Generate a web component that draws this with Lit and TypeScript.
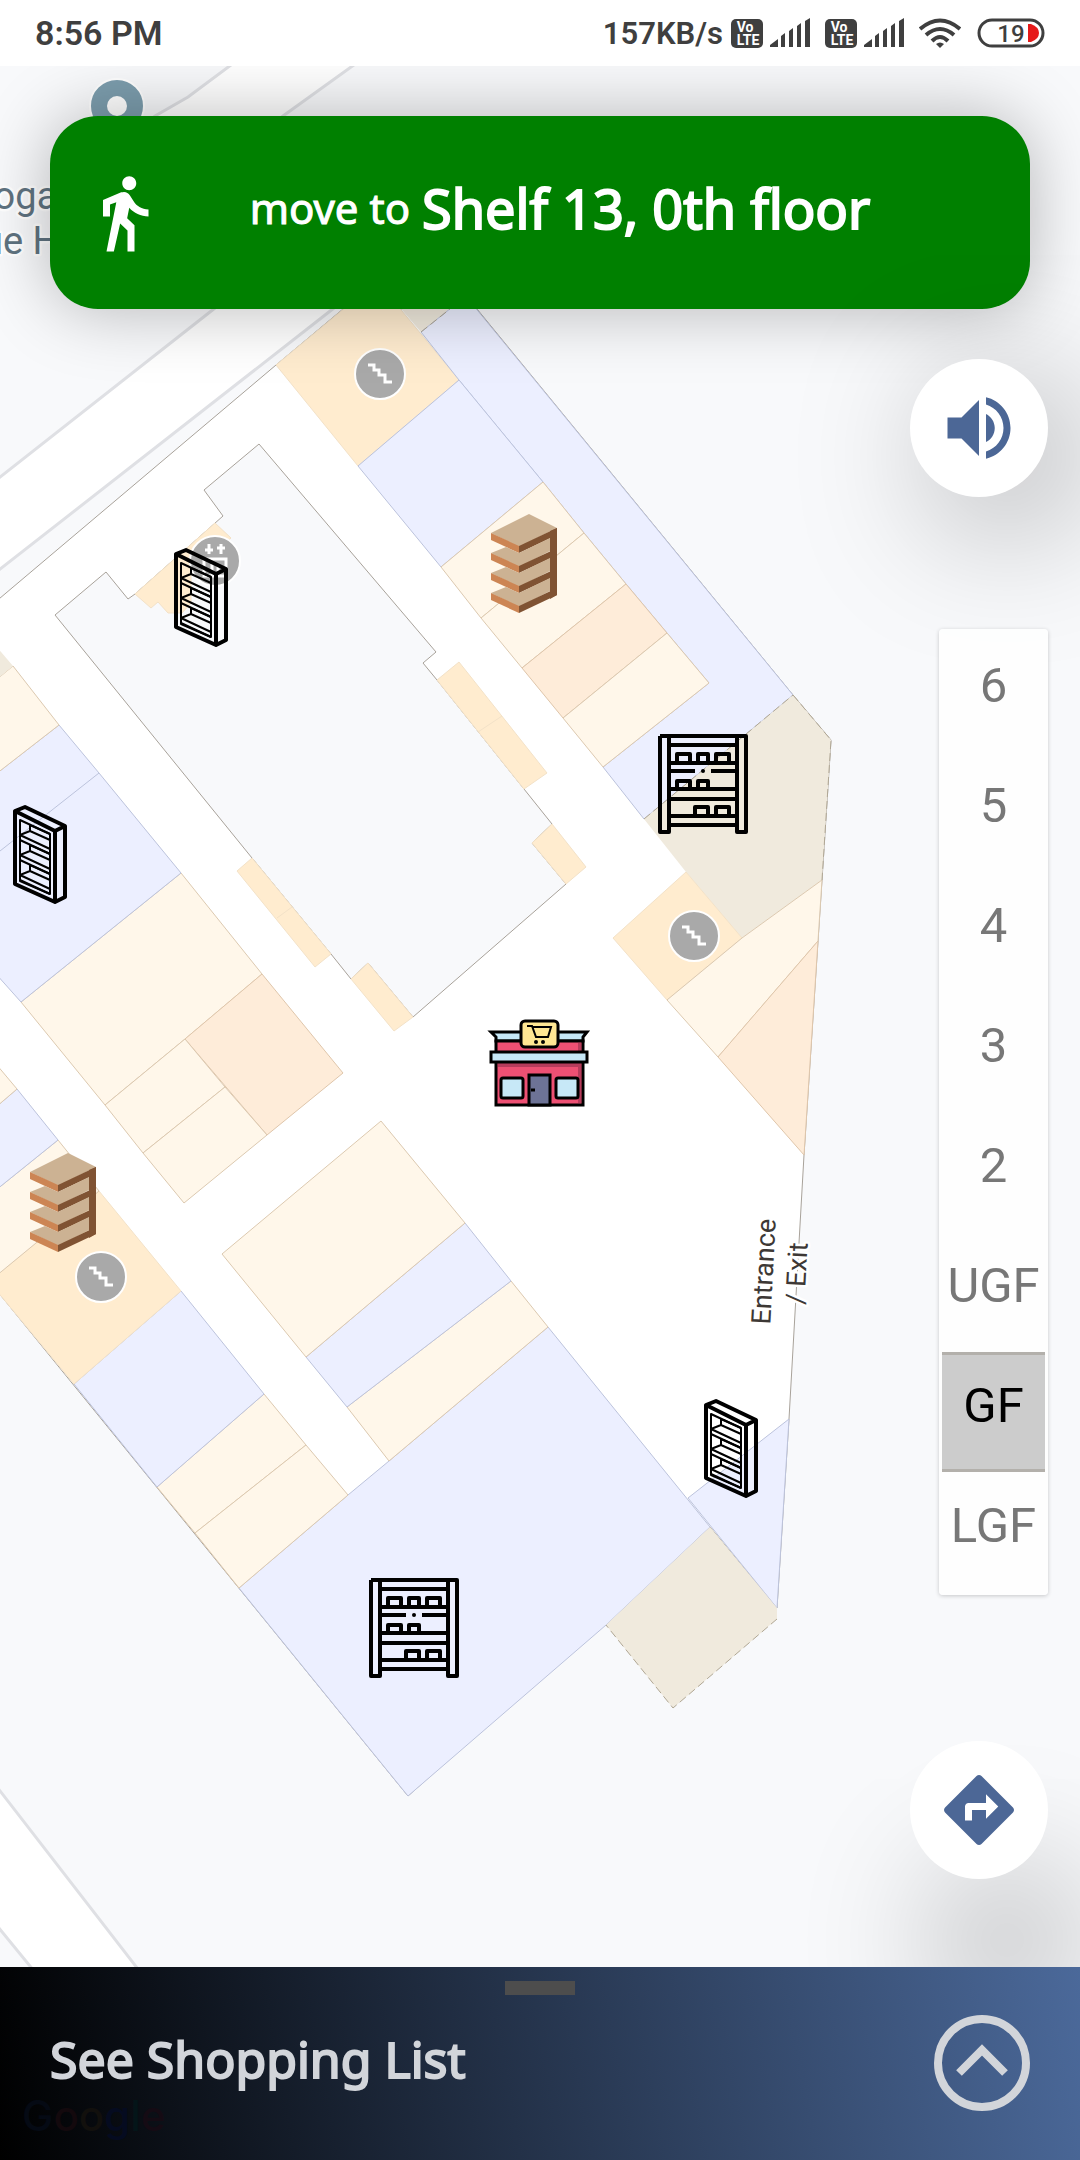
import { LitElement, html, svg, css } from "lit";
import { customElement, property, state } from "lit/decorators.js";
import { classMap } from "lit/directives/class-map.js";

type Area = [kind: string, points: string];
type Spot = [x: number, y: number];

/* Floor plan rooms, by fill kind. */
const AREAS: Area[] = [
  ["hall", "-20,615 276,365 343,309 477,309 793,695 831,740 822,880 804,1155 789,1419 777,1608 710,1527 408,1796 -20,1270"],
  ["lift", "276,365 370,287 383,288 459,380 358,466"],
  ["open", "385,290 421,332 476,288"],
  ["blue", "421,332 476,288 460,289 793,695 644,819 603,767 709,683 667,633 626,584 584,533 543,482 459,380"],
  ["blue", "459,380 543,482 441,567 358,466"],
  ["cream", "543,482 584,533 481,618 441,567"],
  ["cream", "584,533 626,584 522,668 481,618"],
  ["peach", "626,584 667,633 563,718 522,668"],
  ["cream", "667,633 709,683 603,767 563,718"],
  ["open", "793,695 831,740 822,880 742,938 686,872 644,819"],
  ["lift", "686,872 742,938 667,1000 613,938"],
  ["cream", "742,938 822,880 818,941 718,1057 667,1000"],
  ["peach", "818,941 718,1057 804,1155"],
  ["blue", "789,1419 688,1498 777,1608"],
  ["blue", "548,1327 710,1527 606,1625 408,1796 239,1588 348,1495 389,1461"],
  ["open", "710,1527 777,1608 777,1619 673,1708 606,1625"],
  ["cream", "511,1281 548,1327 389,1461 347,1407"],
  ["blue", "465,1223 511,1281 347,1407 306,1357"],
  ["cream", "381,1121 465,1223 306,1357 222,1254"],
  ["cream", "264,1394 306,1445 195,1533 157,1487"],
  ["cream", "306,1445 348,1495 239,1588 195,1533"],
  ["blue", "181,1291 264,1394 157,1487 74,1384"],
  ["lift", "99,1191 181,1291 74,1384 -4,1290 -4,1276"],
  ["cream", "58,1140 99,1191 -4,1276 -4,1190"],
  ["blue", "17,1089 58,1140 -4,1190 -4,1107"],
  ["cream", "-4,1064 17,1089 -4,1107"],
  ["cream", "181,873 262,974 185,1039 105,1105 21,1002"],
  ["peach", "262,974 343,1073 267,1135 185,1039"],
  ["cream", "185,1039 225,1087 143,1153 105,1105"],
  ["cream", "225,1087 267,1135 184,1203 143,1153"],
  ["blue", "59,725 99,773 181,873 21,1002 -4,974 -4,774"],
  ["cream", "13,666 59,725 -4,774 -4,680"],
  ["open", "-4,646 13,666 -4,680"],
  ["atrium", "259,444 204,490 223,516 135,594 128,599 106,572 55,615 252,858 331,954 351,979 368,963 413,1017 566,884 532,843 552,824 524,789 437,680 423,663 436,652"],
  ["lift", "215,523 231,538 191,575 191,603 182,613 168,613 158,602 151,608 135,594"],
  ["lift", "459,662 437,680 524,789 547,773"],
  ["lift", "552,824 532,843 566,884 586,867"],
  ["lift", "252,858 237,871 315,967 331,954"],
  ["lift", "368,963 351,979 394,1031 413,1017"],
];

const BOOKCASES: Spot[] = [[174, 548], [13, 805], [704, 1399]];
const WOOD_SHELVES: Spot[] = [[490, 513], [29, 1152]];
const RACKS: Spot[] = [[658, 734], [369, 1578]];
const STAIRS: Spot[] = [[380, 374], [694, 936], [101, 1277]];

const at = ([x, y]: Spot) => `translate(${x} ${y})`;

const bookcase = (s: Spot) => svg`
  <g transform=${at(s)} class="ink">
    <path stroke-width="4" d="M2 6 12 2 52 21V92L42 97 2 79ZM2 6 42 26 52 21M42 26V97"/>
    <path stroke-width="2" d="M7 15 37 29V89L7 76Z"/>
    ${[0, 20, 40].map((d) => svg`
      <path stroke-width="2" transform=${`translate(0 ${d})`}
        d="M17 19V26L7 30 37 44M7 35 37 49M17 26 37 35M17 20 37 29"/>`)}
  </g>`;

const woodShelf = (s: Spot) => svg`
  <g transform=${at(s)}>
    ${[0, 1, 2, 3].map((i) => {
      const y = [20, 40, 60, 80][i];
      return svg`
        <path fill="#ccb293" d=${i === 0
          ? "M39 1 67 15 29 34 1 20Z"
          : `M1 ${y}L16 ${y - 6} 29 ${y} 60 ${y - 15}V${y - 2}L29 ${y + 14}Z`}/>
        <path fill="#cc8554" d=${`M1 ${y}L29 ${y + 13}V${y + 20}L1 ${y + 7}Z`}/>
        <path fill="#805333" d=${i % 3 === 0
          ? `M29 ${y + 13}L67 ${y - 5}V${y + 2}L29 ${y + 20}Z`
          : `M29 ${y + 13}L61 ${y - 2}V${y + 5}L29 ${y + 20}Z`}/>`;
    })}
    <path fill="#805333" d="M60 18 67 15V82L60 86Z"/>
  </g>`;

const rack = (s: Spot) => svg`
  <g transform=${at(s)} class="ink" stroke-width="4">
    <path d="M2 2H88V98H79V2M2 2V98H11V2"/>
    <path d="M11 11H79M11 29H79M11 37H37M53 37H79M11 55H79M11 65H79M11 82H79M11 91H79"/>
    <path d="M19 29V20H32V29M40 29V20H50V29M58 29V20H71V29M19 55V47H32V55M40 55V47H50V55M37 82V73H50V82M58 82V73H71V82"/>
    <circle cx="45" cy="37" r="2" fill="#000" stroke="none"/>
  </g>`;

const stairs = (s: Spot) => svg`
  <g transform=${at(s)}>
    <circle r="25" fill="#a9a9a9" stroke="#fff" stroke-width="2"/>
    <path fill="none" stroke="#fff" stroke-width="3" d="M-12-9H-6V-4H-1V1H5V8H12"/>
  </g>`;

const store = svg`
  <g transform="translate(489 1019)">
    <path fill="#c7e8f7" stroke="#000" stroke-width="3" d="M2 13H98L94 18V22H7V18Z"/>
    <path fill="#ee5073" stroke="#000" stroke-width="3" d="M7 22H94V86H7Z"/>
    <path fill="#b73c5c" d="M9 44H92V48H9ZM89 24H92V84H89Z"/>
    <rect x="2" y="33" width="96" height="10" fill="#c7e8f7" stroke="#000" stroke-width="3"/>
    <rect x="12" y="59" width="22" height="20" rx="2" fill="#c7e8f7" stroke="#000" stroke-width="3"/>
    <rect x="67" y="59" width="22" height="20" rx="2" fill="#c7e8f7" stroke="#000" stroke-width="3"/>
    <path fill="#6d7396" stroke="#000" stroke-width="3" d="M40 86V56H61V86Z"/>
    <path stroke="#000" stroke-width="3" d="M42 71H46"/>
    <rect x="32" y="2" width="37" height="26" rx="4" fill="#ffe793" stroke="#000" stroke-width="3"/>
    <path fill="none" stroke="#000" stroke-width="2" d="M38 7H43L47 18H59L62 8H44"/>
    <circle cx="47" cy="23" r="2"/><circle cx="54" cy="23" r="2"/>
  </g>`;

@customElement("floor-map")
class FloorMap extends LitElement {
  static styles = css`
    :host { display: block; }
    svg { display: block; width: 100%; height: 100%; background: #f8f9fb; }
    polygon { stroke-width: 1; }
    .hall { fill: #fff; stroke: #a8a29a; }
    .atrium { fill: #f8f9fb; stroke: #a8a29a; }
    .lift { fill: #ffeccf; stroke: #f3e2c8; }
    .open { fill: #f0eadd; }
    .edge { fill: none; stroke: #b0a794; stroke-dasharray: 8 4; }
    .blue { fill: #ecefff; stroke: #bcc3dc; }
    .cream { fill: #fff7ea; stroke: #dcc9b0; }
    .peach { fill: #feecd9; stroke: #dfc6ab; }
    .road { fill: #fff; stroke: #dfe0e4; stroke-width: 3; }
    .seam { fill: none; stroke: #bcc3dc; }
    .seam-lift { fill: none; stroke: #f3e2c8; }
    .ink { fill: none; stroke: #000; stroke-linejoin: round; }
    text { font-family: Roboto, "Liberation Sans", sans-serif; paint-order: stroke; stroke: #fff; stroke-width: 5px; stroke-linejoin: round; }
    .place { font-size: 38px; fill: #5f7380; }
    .gate { font-size: 27px; fill: #3d3835; text-anchor: middle; }
  `;

  render() {
    return html`
      <svg viewBox="0 66 1080 1901" preserveAspectRatio="xMidYMin slice" role="img" aria-label="Floor map">
        <path class="road" d="M235 62 188 97 155 116 100 160H230L283 116 358 62Z"/>
        <path class="road" d="M-10 485 215 308 260 270H380L334 308-10 577Z"/>
        <path class="road" d="M-10 1778 148 1982H43L-10 1917Z"/>
        ${AREAS.map(([kind, points]) => svg`<polygon class=${kind} points=${points}/>`)}
        <path class="edge" d="M793 695 831 740 822 880M777 1619 673 1708 606 1625M644 819 793 695M421 332 450 309"/>
        <path class="seam" d="M99 773 0 851"/>
        <path class="seam-lift" d="M502 716 478 732M292 907 277 918"/>
        <circle cx="117" cy="106" r="27" fill="#7c9dad" stroke="#fff" stroke-width="2"/>
        <circle cx="117" cy="106" r="10" fill="#fff"/>
        <text class="place" x="-28" y="209">Yoga</text>
        <text class="place" x="-18" y="254">ue H</text>
        <text class="gate" transform="translate(773 1272) rotate(-87)">Entrance</text>
        <text class="gate" transform="translate(806 1274) rotate(-87)">/ Exit</text>
        ${STAIRS.map(stairs)}
        <g transform="translate(215 561)">
          <circle r="25" fill="#a9a9a9" stroke="#fff" stroke-width="2"/>
          <path fill="none" stroke="#fff" stroke-width="3" d="M-6-17V-7M-10-11H-2M6-7V-17M2-13H10M-11-2H11V15H-11ZM-3 3V15M3 3V15"/>
        </g>
        ${BOOKCASES.map(bookcase)} ${WOOD_SHELVES.map(woodShelf)} ${RACKS.map(rack)} ${store}
      </svg>`;
  }
}

@customElement("status-bar")
class StatusBar extends LitElement {
  static styles = css`
    :host { display: flex; align-items: center; justify-content: space-between; height: 66px; padding: 0 35px; box-sizing: border-box; background: #fff; color: #3f3f3f; font-family: Roboto, "Liberation Sans", sans-serif; font-weight: 600; }
    .time { font-size: 34px; }
    .rate { font-size: 31px; margin-right: 8px; }
    .icons { display: flex; align-items: center; }
    .sim { display: flex; gap: 7px; margin-right: 15px; }
    svg { display: block; }
    .wifi { margin-right: 16px; }
    .badge { font-size: 14px; font-weight: 700; fill: #fff; text-anchor: middle; }
    .charge { font-size: 24px; font-weight: 500; fill: #3f3f3f; text-anchor: middle; }
  `;

  private sim() {
    return html`
      <span class="sim">
        <svg width="32" height="30" viewBox="0 0 32 30">
          <rect y="1" width="32" height="29" rx="5" fill="#3f3f3f"/>
          <text class="badge" x="14" y="14">Vo</text>
          <text class="badge" x="17" y="27">LTE</text>
        </svg>
        <svg width="40" height="30" viewBox="0 0 40 30" fill="#3f3f3f">
          <path d="M0 29V27L8 21V29ZM11 29V18L15 15V29ZM19 29V13L23 10V29ZM27 29V8L31 5V29ZM35 29V3L40 0V29Z"/>
        </svg>
      </span>`;
  }

  render() {
    return html`
      <span class="time">8:56 PM</span>
      <span class="icons">
        <span class="rate">157KB/s</span>
        ${this.sim()} ${this.sim()}
        <svg class="wifi" width="42" height="30" viewBox="0 0 42 30" fill="none" stroke="#3f3f3f" stroke-width="4">
          <path d="M1 11Q21-6 41 11M7 17Q21 5 35 17M13 23Q21 15 29 23"/>
          <path fill="#3f3f3f" stroke="none" d="M17 26Q21 23 25 26L21 30Z"/>
        </svg>
        <svg width="68" height="30" viewBox="0 0 68 30">
          <rect x="2" y="2" width="64" height="26" rx="13" fill="#fff" stroke="#3f3f3f" stroke-width="3"/>
          <text class="charge" x="34" y="24">19</text>
          <path fill="#e61a1a" d="M51 6H54Q62 9 62 15T54 24H51Z"/>
        </svg>
      </span>`;
  }
}

@customElement("app-root")
class AppRoot extends LitElement {
  @property({ type: Array }) floors = ["6", "5", "4", "3", "2", "UGF", "GF", "LGF"];
  @state() private floor = "GF";

  static styles = css`
    :host { display: flex; flex-direction: column; min-height: 100vh; font-family: "Noto Sans", "Open Sans", sans-serif; }
    button { border: 0; margin: 0; padding: 0; background: none; font: inherit; cursor: pointer; }
    svg { display: block; }
    .stage { position: relative; flex: 1; display: flex; flex-direction: column; padding-top: 50px; overflow: hidden; }
    .map { position: absolute; inset: 0; }
    .banner { position: relative; display: flex; align-items: center; margin: 0 50px; padding: 0 76px 0 32px; height: 193px; box-sizing: border-box; border-radius: 48px; background: #008000; color: #fff; box-shadow: 0 0 70px rgba(0, 0, 0, 0.28); }
    .step { flex: 1; display: flex; align-items: center; justify-content: center; gap: 12px; margin: 0; padding-bottom: 10px; white-space: nowrap; -webkit-text-stroke: 1px currentColor; }
    .verb { font-size: 42px; }
    .target { font-size: 54px; -webkit-text-stroke-width: 2px; }
    .controls { position: relative; flex: 1; display: flex; flex-direction: column; align-items: flex-end; padding: 50px 32px 88px; }
    .round { display: grid; place-items: center; width: 138px; height: 138px; border-radius: 50%; background: #fff; color: #4c6796; }
    .sound { box-shadow: 28px 28px 140px rgba(0, 0, 0, 0.35); }
    .route { margin-top: auto; box-shadow: 28px 130px 140px rgba(0, 0, 0, 0.3); }
    .floors { display: flex; flex-direction: column; width: 109px; margin-top: 132px; padding: 3px; box-sizing: border-box; border-radius: 4px; background: rgba(255, 255, 255, 0.8); box-shadow: 0 1px 4px rgba(0, 0, 0, 0.2); }
    .floor { height: 120px; padding-bottom: 14px; box-sizing: border-box; font-family: Roboto, "Liberation Sans", sans-serif; font-size: 49px; color: #777; border: solid transparent; border-width: 3px 0; }
    .current { background: #ccc; color: #000; border-color: #b3b0ab; }
    .sheet { position: relative; padding: 14px 50px 49px; background: linear-gradient(80deg, #000, #4b699a); }
    .handle { width: 70px; height: 14px; margin: 0 auto 20px; background: #4d4d4d; }
    .row { position: relative; display: flex; align-items: center; justify-content: space-between; width: 100%; height: 96px; color: #d2d5da; }
    .title { margin-bottom: 8px; font-size: 50px; line-height: 52px; -webkit-text-stroke: 2px currentColor; }
    .brand { position: absolute; left: 22px; bottom: 22px; font: 500 42px/44px Inter, sans-serif; }
    .b1 { color: #050a14; }
    .b2 { color: #13090d; }
    .b3 { color: #12100d; }
    .b4 { color: #050b20; }
    .b5 { color: #041519; }
    .b6 { color: #150b14; }
  `;

  render() {
    return html`
      <status-bar></status-bar>
      <main class="stage">
        <floor-map class="map"></floor-map>
        <header class="banner">
          <svg width="84" height="84" viewBox="0 0 24 24" fill="currentColor" aria-hidden="true">
            <path d="M13.500 5.500c1.100 0 2-.9 2-2s-.9-2-2-2-2 .9-2 2 .9 2 2 2zM9.800 8.900L7 23h2.100l1.800-8 2.100 2v6h2v-7.500l-2.100-2 .6-3C14.800 12 16.800 13 19 13v-2c-1.900 0-3.500-1-4.300-2.400l-1-1.600c-.4-.6-1-1-1.700-1-.3 0-.5.1-.8.1L6 8.300V13h2V9.600l1.800-.7"/>
          </svg>
          <p class="step"><span class="verb">move to</span><span class="target">Shelf 13, 0th floor</span></p>
        </header>
        <div class="controls">
          <button class="round sound" aria-label="Voice guidance">
            <svg width="84" height="84" viewBox="0 0 24 24" fill="currentColor">
              <path d="M3 9v6h4l5 5V4L7 9H3zm13.500 3c0-1.770-1.020-3.290-2.500-4.030v8.050c1.480-.73 2.500-2.250 2.500-4.020zM14 3.230v2.060c2.890.86 5 3.540 5 6.710s-2.110 5.850-5 6.710v2.060c4.010-.91 7-4.490 7-8.770s-2.990-7.860-7-8.770z"/>
            </svg>
          </button>
          <nav class="floors" aria-label="Floor">
            ${this.floors.map((name) => html`
              <button
                class=${classMap({ floor: true, current: name === this.floor })}
                aria-pressed=${name === this.floor ? "true" : "false"}
                @click=${() => (this.floor = name)}
              >${name}</button>`)}
          </nav>
          <button class="round route" aria-label="Directions">
            <svg width="84" height="84" viewBox="0 0 24 24" fill="currentColor">
              <path d="M21.710 11.290l-9-9c-.39-.39-1.020-.39-1.410 0l-9 9c-.39.39-.39 1.020 0 1.410l9 9c.39.39 1.020.39 1.410 0l9-9c.39-.38.39-1.010 0-1.410zM14 14.500V12h-4v3H8v-4c0-.55.45-1 1-1h5V7.500l3.500 3.500-3.500 3.500z"/>
            </svg>
          </button>
        </div>
      </main>
      <footer class="sheet">
        <span class="brand" aria-hidden="true"><span class="b1">G</span><span class="b2">o</span><span class="b3">o</span><span class="b4">g</span><span class="b5">l</span><span class="b6">e</span></span>
        <div class="handle"></div>
        <button class="row">
          <span class="title">See Shopping List</span>
          <svg width="96" height="96" viewBox="0 0 96 96" fill="none" stroke="currentColor" stroke-width="8" aria-hidden="true">
            <circle cx="48" cy="48" r="44"/>
            <path d="M25 58 48 35 71 58"/>
          </svg>
        </button>
      </footer>`;
  }
}
